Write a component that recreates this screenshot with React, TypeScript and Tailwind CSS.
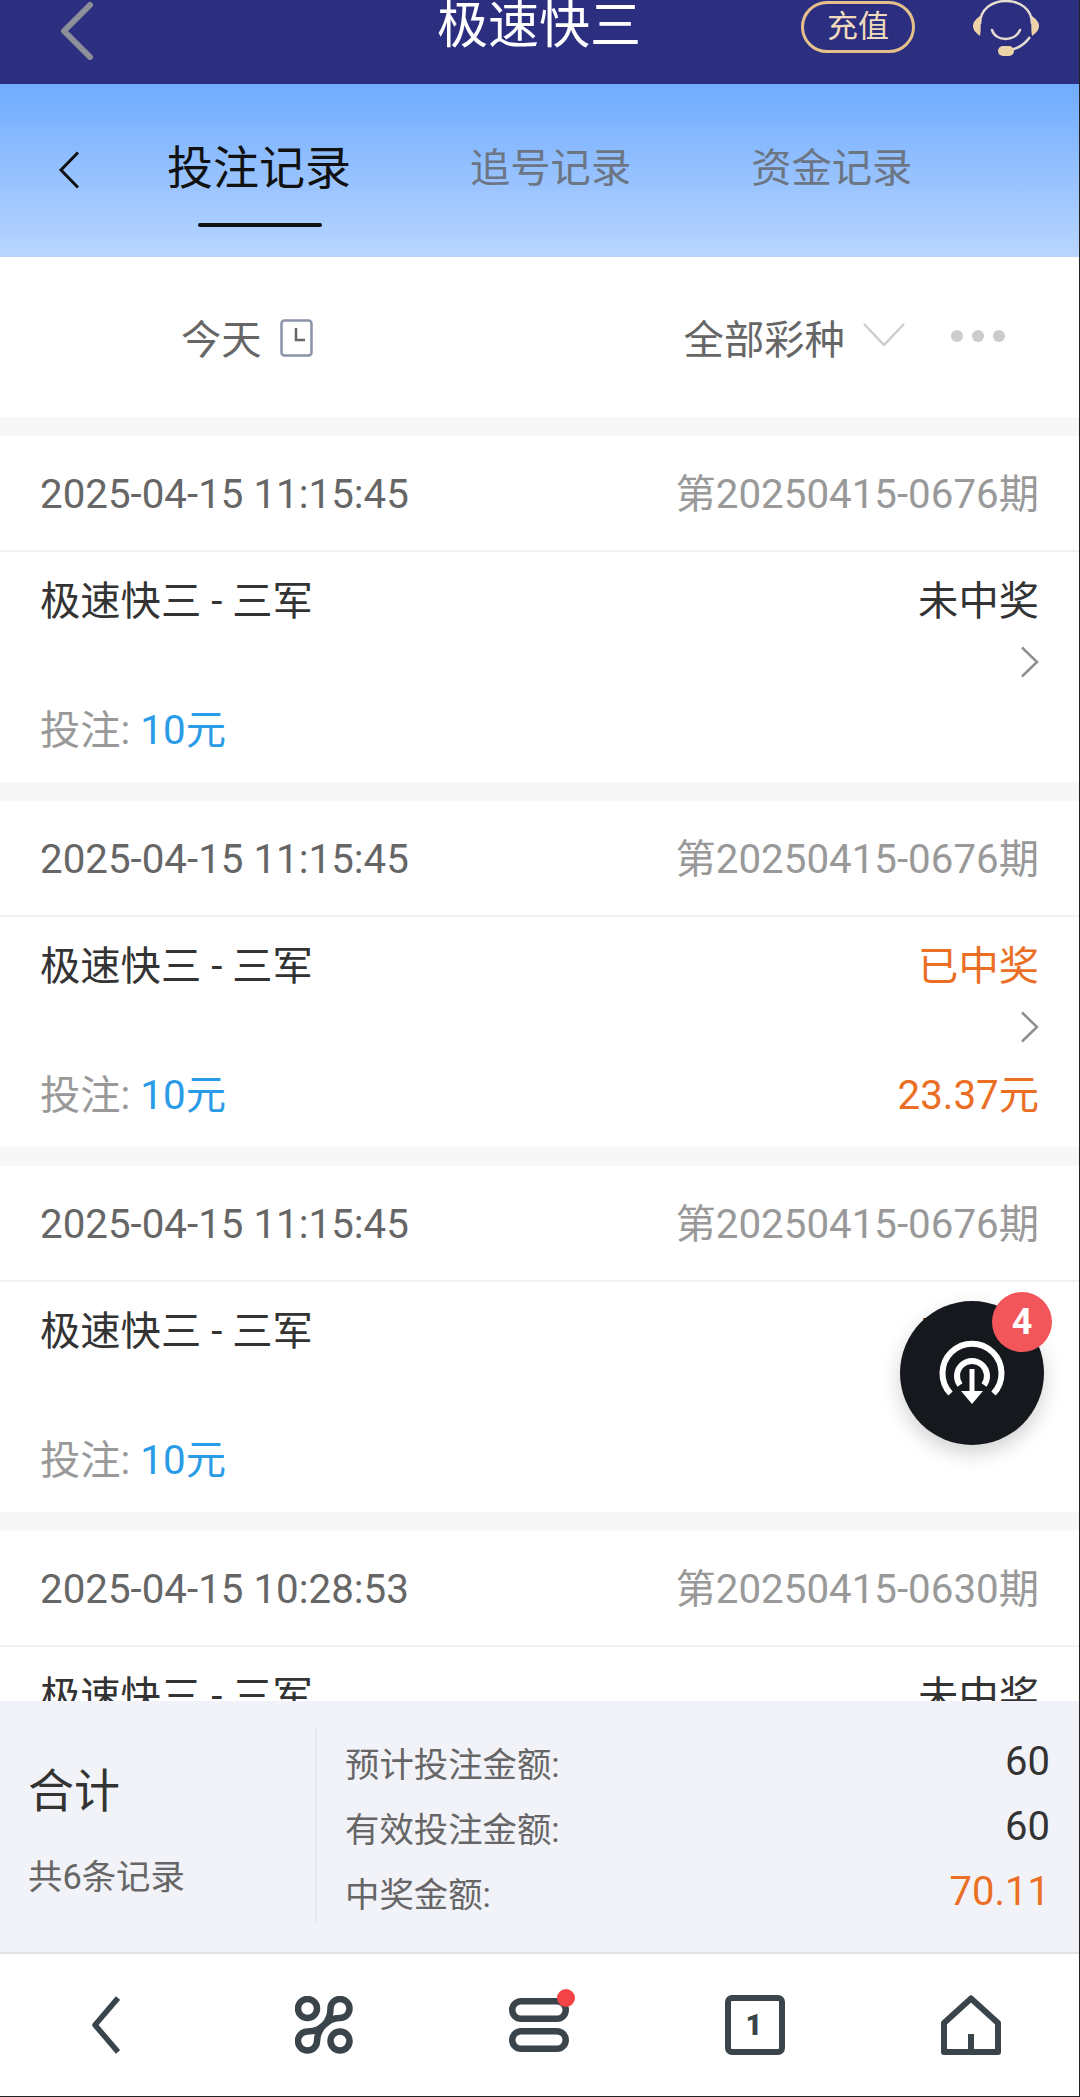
import React from "react";

const records = [
  { time: "2025-04-15 11:15:45", issue: "第20250415-0676期", status: "未中奖" },
  { time: "2025-04-15 11:15:45", issue: "第20250415-0676期", status: "已中奖", prize: "23.37元" },
  { time: "2025-04-15 11:15:45", issue: "第20250415-0676期", status: "未中奖" },
  { time: "2025-04-15 10:28:53", issue: "第20250415-0630期", status: "未中奖" },
];

function RecordCard({ time, issue, status, prize }: { time: string; issue: string; status: string; prize?: string }) {
  const won = status === "已中奖";
  return (
    <div className="bg-white mb-[19px] shrink-0">
      <div className="h-[116px] px-10 pt-[4px] flex items-center justify-between border-b-2 border-[#f2f2f2] text-[40.3px]">
        <span className="text-[#666666]">{time}</span>
        <span className="text-[#999999]">{issue}</span>
      </div>
      <div className="h-[230px] px-10 pt-[26px] flex flex-col text-[40.3px] leading-[48px]">
        <div className="flex justify-between">
          <span className="text-[#333333]">极速快三 - 三军</span>
          <span className={won ? "text-[#ea6f25]" : "text-[#333333]"}>{status}</span>
        </div>
        <div className="h-[81px] flex justify-end items-center pb-[10px]">
          <svg width="20" height="32" viewBox="0 0 20 32" fill="none" className="block">
            <path d="M3 1.5L18 16L3 30.5" stroke="#8f8f8f" strokeWidth="2.5" />
          </svg>
        </div>
        <div className="flex justify-between">
          <span>
            <span className="text-[#999999]">投注: </span>
            <span className="text-[#2a9be6]">10元</span>
          </span>
          {prize && <span className="text-[#ea6f25]">{prize}</span>}
        </div>
      </div>
    </div>
  );
}

function SummaryRow({ label, value, accent }: { label: string; value: string; accent?: boolean }) {
  return (
    <div className="flex justify-between items-center">
      <span className="mt-[8px] text-[34.4px] text-[#666666]">{label}</span>
      <span className={`text-[40px] ${accent ? "text-[#ea6f25]" : "text-[#333333]"}`}>{value}</span>
    </div>
  );
}

function NavIcon({ children }: { children: React.ReactNode }) {
  return <div className="flex items-center justify-center">{children}</div>;
}

export default function App() {
  return (
    <div className="relative w-[1080px] h-[2097px] box-border border-r border-b border-[#222222] overflow-hidden flex flex-col bg-white font-['Roboto','Noto_Sans_CJK_SC',sans-serif]">
      {/* Top bar */}
      <header className="h-[84px] shrink-0 bg-[#2c2f80] flex items-start pl-[60px] overflow-hidden">
        <svg width="34" height="58" viewBox="0 0 34 58" fill="none" className="mt-[2px] block">
          <path d="M30 3L4 29L30 55" stroke="#8d9098" strokeWidth="6" strokeLinecap="round" strokeLinejoin="round" />
        </svg>
        <h1 className="ml-[343px] text-[51px] leading-[52px] text-white font-normal">极速快三</h1>
        <div className="ml-[160px] mt-[1px] w-[114px] h-[52px] rounded-full border-[3px] border-[#e6c08a] flex items-center justify-center text-[31px] text-[#f0dcbc]">
          充值
        </div>
        <svg width="66" height="56" viewBox="0 0 66 56" fill="none" className="ml-[58px] block">
          <path d="M7 24C7 9 19 1 33 1C47 1 59 9 59 24" stroke="#e6dccf" strokeWidth="2.5" />
          <path d="M7 16C3 19 0 22 0 26C0 30 3 33 7 36C8 30 8 22 7 16Z" fill="#edd3a8" />
          <path d="M59 16C63 19 66 22 66 26C66 30 63 33 59 36C58 30 58 22 59 16Z" fill="#edd3a8" />
          <path d="M19 30C23 42 42 42 47 30" stroke="#e6dccf" strokeWidth="2.5" strokeLinecap="round" />
          <path d="M38 50C46 48 52 44 57 37" stroke="#e6dccf" strokeWidth="2.5" />
          <rect x="25" y="46" width="16" height="10" rx="5" fill="#edd3a8" />
        </svg>
      </header>

      {/* Tabs */}
      <div className="h-[173px] shrink-0 bg-gradient-to-b from-[#6fabff] to-[#b8d5ff] flex items-start pl-[58px]">
        <svg width="22" height="38" viewBox="0 0 22 38" fill="none" className="mt-[67px] block">
          <path d="M20 1.5L3 19L20 36.5" stroke="#111111" strokeWidth="3" />
        </svg>
        <div className="ml-[87px] w-[184px] h-full flex flex-col items-center">
          <span className="mt-[58px] text-[46px] leading-[52px] text-[#111111]">投注记录</span>
          <span className="mt-[29px] ml-[2px] w-[124px] h-[4px] rounded-full bg-[#111111]" />
        </div>
        <span className="ml-[119px] mt-[61px] text-[40.3px] leading-[48px] text-[#6c7584]">追号记录</span>
        <span className="ml-[120px] mt-[61px] text-[40.3px] leading-[48px] text-[#6c7584]">资金记录</span>
      </div>

      {/* Filters */}
      <div className="h-[160px] shrink-0 bg-white flex items-center pt-[8px] pl-[181px] text-[40.3px] text-[#666666]">
        <span>今天</span>
        <svg width="33" height="38" viewBox="0 0 33 38" fill="none" className="ml-[18px] -mt-[6px] block">
          <rect x="1.5" y="1.5" width="30" height="35" rx="3" stroke="#8a93a8" strokeWidth="2.5" />
          <path d="M16 9V21H25" stroke="#666666" strokeWidth="2.5" />
        </svg>
        <span className="ml-[371px]">全部彩种</span>
        <svg width="42" height="24" viewBox="0 0 42 24" fill="none" className="ml-[18px] -mt-[12px] block">
          <path d="M1 1L21 22L41 1" stroke="#cccccc" strokeWidth="2.5" />
        </svg>
        <div className="ml-[46px] -mt-[10px] flex gap-[9px]">
          <span className="w-3 h-3 rounded-full bg-[#cccccc]" />
          <span className="w-3 h-3 rounded-full bg-[#cccccc]" />
          <span className="w-3 h-3 rounded-full bg-[#cccccc]" />
        </div>
      </div>

      {/* Record list */}
      <div className="flex-1 min-h-0 overflow-hidden bg-[#f7f7f7] pt-[19px] flex flex-col">
        {records.map((r, i) => (
          <RecordCard key={i} {...r} />
        ))}
      </div>

      {/* Summary */}
      <div className="h-[253px] shrink-0 bg-[#f2f3f8] border-b-2 border-[#e2e2e6] flex items-center">
        <div className="w-[315px] pl-[28px] pt-[6px]">
          <div className="text-[46px] leading-[56px] text-[#333333]">合计</div>
          <div className="mt-[38px] text-[34.4px] leading-[40px] text-[#666666]">共6条记录</div>
        </div>
        <div className="flex-1 h-[195px] border-l-2 border-[#e8e9ee] pl-[28px] pr-[29px] grid grid-rows-3">
          <SummaryRow label="预计投注金额:" value="60" />
          <SummaryRow label="有效投注金额:" value="60" />
          <SummaryRow label="中奖金额:" value="70.11" accent />
        </div>
      </div>

      {/* Bottom nav */}
      <nav className="h-[142px] shrink-0 bg-white grid grid-cols-5">
        <NavIcon>
          <svg width="28" height="58" viewBox="0 0 28 58" fill="none" className="-ml-[4px] block">
            <path d="M26 2L3 29L26 56" stroke="#3a444b" strokeWidth="5.5" strokeLinejoin="round" />
          </svg>
        </NavIcon>
        <NavIcon>
          <svg width="58" height="58" viewBox="0 0 58 58" fill="none" className="block">
            <circle cx="12.5" cy="12.5" r="9.5" stroke="#3a444b" strokeWidth="6.5" />
            <circle cx="45" cy="45" r="9.5" stroke="#3a444b" strokeWidth="6.5" />
            <path
              d="M35.5 12.5a9.5 9.5 0 1 1 9.5 9.5C37 22 33.5 25 29 29C24.5 33 21 35.5 12.5 35.5a9.5 9.5 0 1 0 9.5 9.5C22 37 25 33 29 29C33 25 35.5 20 35.5 12.5Z"
              stroke="#3a444b"
              strokeWidth="6.5"
            />
          </svg>
        </NavIcon>
        <NavIcon>
          <svg width="60" height="54" viewBox="0 0 60 54" fill="none" className="block overflow-visible">
            <rect x="3.25" y="3.25" width="53.5" height="17.5" rx="8.75" stroke="#3a444b" strokeWidth="6.5" />
            <rect x="3.25" y="33.25" width="53.5" height="17.5" rx="8.75" stroke="#3a444b" strokeWidth="6.5" />
            <circle cx="57" cy="0" r="9" fill="#f44347" />
          </svg>
        </NavIcon>
        <NavIcon>
          <svg width="60" height="60" viewBox="0 0 60 60" fill="none" className="block">
            <rect x="3" y="3" width="54" height="54" rx="4" stroke="#3a444b" strokeWidth="6" />
            <text x="29" y="40" textAnchor="middle" fontSize="29" fontWeight="900" fill="#3a444b" fontFamily="Roboto, sans-serif">
              1
            </text>
          </svg>
        </NavIcon>
        <NavIcon>
          <svg width="60" height="60" viewBox="0 0 60 60" fill="none" className="block">
            <path d="M30 3.5L57 28V57H3V28L30 3.5Z" stroke="#3a444b" strokeWidth="6" strokeLinejoin="round" />
            <path d="M30 39V57" stroke="#3a444b" strokeWidth="6" />
          </svg>
        </NavIcon>
      </nav>

      {/* Floating download button */}
      <div className="absolute left-[900px] top-[1301px] w-[144px] h-[144px] rounded-full bg-[#15181d] shadow-[0_8px_20px_rgba(0,0,0,0.18)]">
        <svg width="144" height="144" viewBox="0 0 144 144" fill="none" className="block">
          <path d="M50.5 92.5A29.5 29.5 0 1 1 93.5 92.5" stroke="#ffffff" strokeWidth="6" />
          <path d="M60 84A15 15 0 1 1 84 84" stroke="#ffffff" strokeWidth="6" />
          <path d="M72 68V92" stroke="#ffffff" strokeWidth="5" />
          <path d="M61 90H83L72 103Z" fill="#ffffff" />
        </svg>
        <div className="absolute left-[92px] -top-[9px] w-[60px] h-[60px] rounded-full bg-[#f2555a] flex items-center justify-center text-[36px] font-bold text-white">
          4
        </div>
      </div>
    </div>
  );
}
